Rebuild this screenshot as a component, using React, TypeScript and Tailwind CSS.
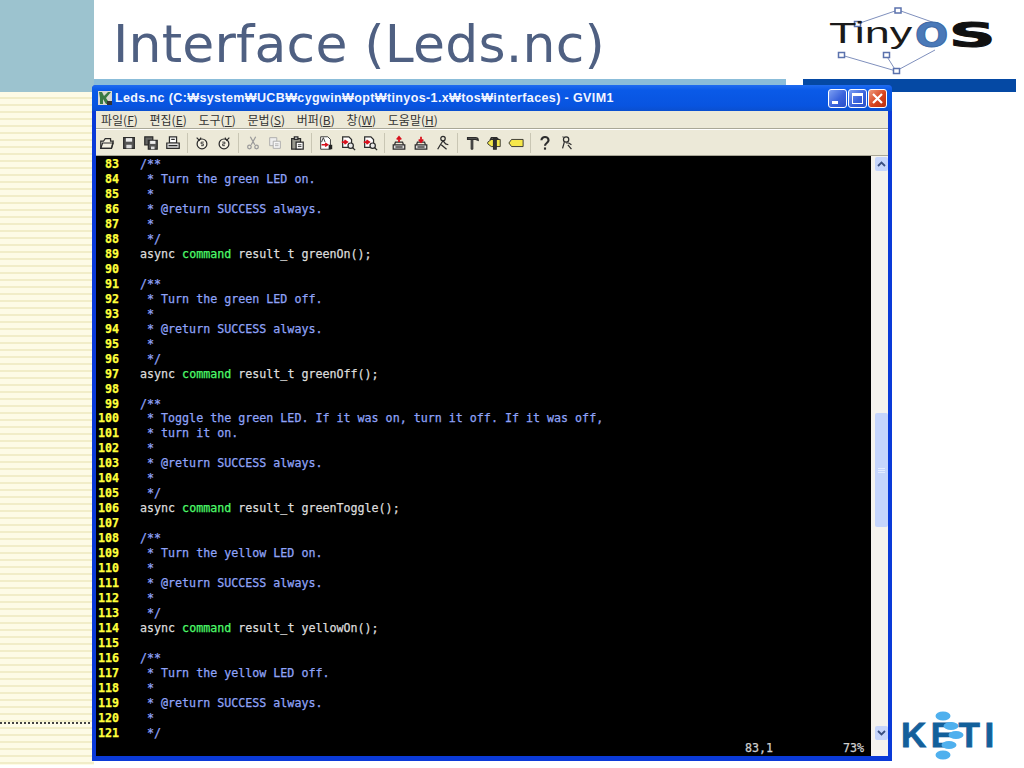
import type { ReactNode } from "react";

const mono = "font-['DejaVu_Sans_Mono',monospace]";

type Part = { text: string; color: string };

const c = (text: string): Part[] => [{ text, color: "text-[#8fa3f8]" }];
const cmd = (name: string): Part[] => [
  { text: "async ", color: "text-[#dcdcdc]" },
  { text: "command", color: "text-[#4dfa6a]" },
  { text: ` result_t ${name}();`, color: "text-[#dcdcdc]" },
];

const lines: Part[][] = [
  c("/**"),
  c(" * Turn the green LED on."),
  c(" *"),
  c(" * @return SUCCESS always."),
  c(" *"),
  c(" */"),
  cmd("greenOn"),
  [],
  c("/**"),
  c(" * Turn the green LED off."),
  c(" *"),
  c(" * @return SUCCESS always."),
  c(" *"),
  c(" */"),
  cmd("greenOff"),
  [],
  c("/**"),
  c(" * Toggle the green LED. If it was on, turn it off. If it was off,"),
  c(" * turn it on."),
  c(" *"),
  c(" * @return SUCCESS always."),
  c(" *"),
  c(" */"),
  cmd("greenToggle"),
  [],
  c("/**"),
  c(" * Turn the yellow LED on."),
  c(" *"),
  c(" * @return SUCCESS always."),
  c(" *"),
  c(" */"),
  cmd("yellowOn"),
  [],
  c("/**"),
  c(" * Turn the yellow LED off."),
  c(" *"),
  c(" * @return SUCCESS always."),
  c(" *"),
  c(" */"),
];

const menus = [
  ["파일(", "F", ")"],
  ["편집(", "E", ")"],
  ["도구(", "T", ")"],
  ["문법(", "S", ")"],
  ["버퍼(", "B", ")"],
  ["창(", "W", ")"],
  ["도움말(", "H", ")"],
];

function Icon({ children }: { children: ReactNode }) {
  return (
    <div className="flex h-[22px] w-[22px] items-center justify-center">
      <svg width="16" height="16" viewBox="0 0 18 18" fill="none" stroke="#2c2c2c" strokeWidth="1.400">
        {children}
      </svg>
    </div>
  );
}

function Sep() {
  return <div className="mx-[3px] h-[20px] w-px bg-[#c9c6b4]" />;
}

const floppy = (
  <>
    <path d="M3 3h12v12H3z" fill="#555" />
    <path d="M5.500 3.500h7v4h-7z" fill="#eee" stroke="none" />
    <path d="M6 11h6v4H6z" fill="#ddd" stroke="none" />
  </>
);

const findDoc = (
  <>
    <path d="M3 2h7l3 3v9H3z" fill="#fff" />
    <path d="M2 8h5M5 6l3 2-3 2" stroke="#d8101c" strokeWidth="2" />
    <circle cx="12" cy="12" r="3" fill="#e8e8e8" />
    <path d="M14 14l3 3" />
  </>
);

const disk = (
  <>
    <path d="M2.500 11h13v5h-13z" fill="#ddd" />
    <path d="M5 13.500h8" />
    <path d="M4 11l1-3h8l1 3" />
  </>
);

function Toolbar() {
  return (
    <div className="flex h-[26px] items-center bg-[#ece9d8] border-b border-[#a9a797]">
      <Icon>
        <path d="M2 15V7h3l2-3h6v3h3l-2 8z" fill="#f4f1e2" />
        <path d="M2 15l2-6h12l-2 6z" />
      </Icon>
      <Icon>{floppy}</Icon>
      <Icon>
        <path d="M2 2h9v9H2z" fill="#666" />
        <path d="M6 6h10v10H6z" fill="#555" />
        <path d="M8 6.500h6v3.500H8z" fill="#eee" stroke="none" />
        <path d="M9 13h4v3H9z" fill="#ddd" stroke="none" />
      </Icon>
      <Icon>
        <path d="M5 2h8v7H5z" fill="#fff" />
        <path d="M2 9h14v6H2z" fill="#ddd" />
        <path d="M7 5h4M4 12h10" />
      </Icon>
      <Sep />
      <Icon>
        <circle cx="9" cy="10" r="5.500" fill="#f4f1e2" />
        <path d="M3 3l3 3 2-3" />
        <path d="M11 8H8v2h2.500v2H8" strokeWidth="1" />
      </Icon>
      <Icon>
        <circle cx="9" cy="10" r="5.500" fill="#f4f1e2" />
        <path d="M15 3l-3 3-2-3" />
        <path d="M7 8h3v2H7.500v2H10" strokeWidth="1" />
      </Icon>
      <Sep />
      <Icon>
        <g stroke="#9a9a9a">
          <path d="M6 2l5 9M12 2l-5 9" />
          <circle cx="5" cy="13.500" r="2" />
          <circle cx="13" cy="13.500" r="2" />
        </g>
      </Icon>
      <Icon>
        <g stroke="#a8a8a8" strokeWidth="1">
          <path d="M3 3h8v9H3z" fill="#eee" />
          <path d="M7 7h8v8H7z" fill="#f6f6f6" />
          <path d="M9 10h4M9 12h4" />
        </g>
      </Icon>
      <Icon>
        <path d="M3 4h10v12H3z" fill="#9a9a90" />
        <path d="M6 2h4v3H6z" fill="#ddd" />
        <path d="M8 8h8v8H8z" fill="#fff" />
        <path d="M10 11h4M10 13h4" strokeWidth="1" />
      </Icon>
      <Sep />
      <Icon>
        <path d="M3 2h8l3 3v11H3z" fill="#fff" strokeWidth="1" />
        <path d="M4 8l2-5 2 5" strokeWidth="1" />
        <path d="M4 11h6M8 9l3 2-3 2" stroke="#d8101c" strokeWidth="1.500" />
        <path d="M12 11h4v5h-4z" fill="#222" stroke="none" />
      </Icon>
      <Icon>{findDoc}</Icon>
      <Icon>{findDoc}</Icon>
      <Sep />
      <Icon>
        {disk}
        <path d="M9 8V3M6.500 5L9 2l2.500 3" stroke="#d8101c" strokeWidth="2" />
      </Icon>
      <Icon>
        {disk}
        <path d="M9 2v5M6.500 5L9 8l2.500-3" stroke="#d8101c" strokeWidth="2" />
      </Icon>
      <Icon>
        <circle cx="9" cy="4" r="2.500" />
        <path d="M9 6.500L6 11l-3 5M9 6.500l3 3.500 3 1M7 11l6 5" />
      </Icon>
      <Sep />
      <Icon>
        <path d="M4 3h9c2 0 3 1 3 3l-3-1H4z" fill="#777" />
        <path d="M8 5h2v11H8z" fill="#555" strokeWidth="1" />
      </Icon>
      <Icon>
        <path d="M2 8l4-3h10v8H6l-4-3z" fill="#f2e64a" strokeWidth="1" />
        <path d="M6 3h6l2 2H5z" fill="#888" />
        <path d="M8.500 4h3v12h-3z" fill="#333" />
      </Icon>
      <Icon>
        <path d="M1 9l3-4h13v8H4z" fill="#f6e84a" strokeWidth="1" />
      </Icon>
      <Sep />
      <Icon>
        <path d="M5 6c0-5 8-5 8 0 0 3-4 3-4 6" strokeWidth="2.400" />
        <path d="M9 14v2.500" strokeWidth="2.400" />
      </Icon>
      <Icon>
        <circle cx="8" cy="5" r="3" />
        <path d="M4 2h1M6 8l-2 7M8 9h3l3 2M10 11l4 5" />
      </Icon>
    </div>
  );
}

function WinButton({ kind }: { kind: "min" | "max" | "close" }) {
  const close = kind === "close";
  return (
    <div
      className={`flex h-[19px] w-[19px] items-center justify-center rounded-[3px] border border-white ${
        close
          ? "bg-[linear-gradient(135deg,#ee9a7c,#d8431e_55%,#b8300f)]"
          : "bg-[linear-gradient(135deg,#7d9ff2,#3a63dc_55%,#2a4fc8)]"
      }`}
    >
      {kind === "min" && <div className="mt-[8px] mr-[5px] h-[3px] w-[6px] bg-white" />}
      {kind === "max" && <div className="h-[11px] w-[11px] border border-t-[3px] border-white" />}
      {close && (
        <svg width="13" height="13" viewBox="0 0 13 13" stroke="white" strokeWidth="2.200">
          <path d="M2 2l9 9M11 2l-9 9" />
        </svg>
      )}
    </div>
  );
}

function ScrollButton({ up }: { up: boolean }) {
  return (
    <div className="flex h-[14px] w-[13px] items-center justify-center rounded-[2px] bg-[#c7d6fb]">
      <svg width="9" height="6" viewBox="0 0 9 6" fill="none" stroke="#3a4f80" strokeWidth="1.800">
        <path d={up ? "M1 5l3.500-3.500L8 5" : "M1 1l3.500 3.500L8 1"} />
      </svg>
    </div>
  );
}

function GvimWindow() {
  return (
    <div className="relative z-10 -mt-[7px] -ml-[2px] flex h-[676px] w-[800px] flex-col rounded-t-[4px] bg-[#0a3ad8]">
      <div className="flex h-[26px] items-center rounded-t-[4px] bg-[linear-gradient(180deg,#1f6cf0_0%,#0a5ae8_20%,#0854e0_80%,#0a4fcf_100%)] pl-[5px] pr-[5px]">
        <svg width="16" height="16" viewBox="0 0 16 16" className="mr-[1px]">
          <path d="M1 1h14v14H1z" fill="#d8d8d0" />
          <path d="M2 2h3l2 4 4-4h3L9 8l4 6H9L6 9v5H3V8z" fill="#3a7a44" />
          <path d="M10 11h5v4h-5z" fill="#333" />
        </svg>
        <span className="ml-[1px] whitespace-nowrap font-['Liberation_Sans','Noto_Sans_CJK_KR',sans-serif] text-[12.500px] font-bold tracking-[0.38px] text-[#f2f5ff]">
          Leds.nc (C:₩system₩UCB₩cygwin₩opt₩tinyos-1.x₩tos₩interfaces) - GVIM1
        </span>
        <div className="ml-auto flex gap-[1px]">
          <WinButton kind="min" />
          <WinButton kind="max" />
          <WinButton kind="close" />
        </div>
      </div>

      <div className="ml-[4px] mr-[4px] mb-[5px] flex min-h-0 flex-1 flex-col bg-[#ece9d8]">
        <div className="flex h-[18px] items-center gap-[11.700px] border-b border-[#a9a797] pl-[5px] font-['Noto_Sans_CJK_KR',sans-serif] text-[12px] text-[#333]">
          {menus.map(([name, key, end]) => (
            <span key={key} className="whitespace-pre">
              {name}
              <span className="underline">{key}</span>
              {end}
            </span>
          ))}
        </div>
        <div className="h-px bg-white" />
        <Toolbar />

        <div className="flex min-h-0 flex-1">
          <div className={`w-[775px] bg-black pl-[2px] pt-px text-[11.670px] leading-[15px] [-webkit-text-stroke:0.25px] ${mono}`}>
            {lines.map((parts, i) => (
              <div key={i} className="flex h-[14.975px] whitespace-pre">
                <span className="w-[21px] text-right font-bold text-[#ffff3c]">{i + 83}</span>
                <span className="ml-[21px]">
                  {parts.map((p) => (
                    <span key={p.text} className={p.color}>
                      {p.text}
                    </span>
                  ))}
                </span>
              </div>
            ))}
            <div className="flex h-[15px] text-[#cfcfcf]">
              <span className="ml-[647px]">83,1</span>
              <span className="ml-[70px]">73%</span>
            </div>
          </div>
          <div className="flex flex-1 flex-col items-end bg-[#f5f3ee] pt-[1px]">
            <ScrollButton up />
            <div className="mt-[242px] flex h-[114px] w-[13px] flex-col items-center justify-center gap-px rounded-[2px] bg-[#c5d5fc]">
              <div className="h-px w-[7px] bg-[#e4ecff]" />
              <div className="h-px w-[7px] bg-[#e4ecff]" />
              <div className="h-px w-[7px] bg-[#e4ecff]" />
            </div>
            <div className="mt-[199px]">
              <ScrollButton up={false} />
            </div>
          </div>
        </div>
      </div>
    </div>
  );
}

function TinyOsLogo() {
  return (
    <div className="relative h-[79px] w-[180px] shrink-0">
      <svg width="180" height="79" viewBox="0 0 180 79" fill="none" stroke="#7f90bd" className="absolute inset-0">
        <path d="M29 24L70 10l37 13M13 55l55 16 39-21M58 55l10 16" />
        <g fill="#fff" stroke="#5b72ad" strokeWidth="1.500">
          <rect x="26.500" y="21.500" width="6" height="5" />
          <rect x="67" y="8" width="6" height="5" />
          <rect x="10.500" y="52.500" width="6" height="5" />
          <rect x="55.500" y="52.500" width="6" height="5" />
          <rect x="65.500" y="68.500" width="6" height="5" />
        </g>
      </svg>
      <span className="absolute left-[1px] top-[18px] origin-left scale-x-[1.5] font-['Liberation_Sans',sans-serif] text-[30px] leading-[30px] text-[#1a1a1a]">
        Tiny
      </span>
      <span className="absolute left-[87px] top-[17px] origin-left scale-x-[1.15] font-['DejaVu_Sans',sans-serif] text-[34px] font-bold leading-[36px] text-[#4a79b8] [-webkit-text-stroke:1px_#3d6aa6]">
        O
      </span>
      <span className="absolute left-[121px] top-[17px] origin-left scale-x-[1.9] font-['DejaVu_Sans',sans-serif] text-[34px] font-bold leading-[36px] text-[#111] [-webkit-text-stroke:1px_#111]">
        S
      </span>
    </div>
  );
}

function KetiLogo() {
  return (
    <div className="relative h-[50px] w-[100px]">
      <span className="absolute left-[2px] top-[5px] font-['Liberation_Sans',sans-serif] text-[35px] font-bold leading-[40px] tracking-[4.500px] text-[#13609b] [-webkit-text-stroke:0.8px_#13609b]">
        KETI
      </span>
      <svg width="100" height="50" viewBox="0 0 100 50" fill="#4fb0ee" className="absolute inset-0">
        <ellipse cx="44" cy="6" rx="7.500" ry="4.500" />
        <ellipse cx="52" cy="16" rx="7.500" ry="4" />
        <ellipse cx="57" cy="25" rx="7.500" ry="4" />
        <ellipse cx="50" cy="35" rx="7.500" ry="4" />
        <ellipse cx="44" cy="45" rx="7.500" ry="4.500" />
      </svg>
    </div>
  );
}

export default function App() {
  return (
    <div className="flex h-[768px] w-[1024px] overflow-hidden bg-white">
      <div className="flex w-[94px] shrink-0 flex-col">
        <div className="h-[92px] bg-[#9cc3cf]" />
        <div className="h-[673px] bg-[repeating-linear-gradient(180deg,#fdfbe6_0px,#fdfbe6_5px,#f1edc8_5px,#f1edc8_7px)]">
          <div className="h-[630px]" />
          <div className="border-t-2 border-dotted border-[#444]" />
        </div>
      </div>

      <div className="flex min-w-0 flex-1 flex-col">
        <div className="flex h-[79px] justify-between">
          <h1 className="whitespace-nowrap pl-[19px] pt-[9px] font-['DejaVu_Sans',sans-serif] text-[52px] font-normal leading-[70px] tracking-[0.2px] text-[#4f6082]">
            Interface (Leds.nc)
          </h1>
          <div className="pr-[16px]">
            <TinyOsLogo />
          </div>
        </div>
        <div className="flex h-[13px]">
          <div className="h-[6px] w-[692px] bg-[#8bbdd9]" />
          <div className="ml-[17px] h-[13px] w-[213px] bg-[#0549a4]" />
        </div>
        <div className="flex flex-1">
          <GvimWindow />
          <div className="flex flex-1 items-end pb-[8px] pl-[7px]">
            <KetiLogo />
          </div>
        </div>
      </div>
    </div>
  );
}
